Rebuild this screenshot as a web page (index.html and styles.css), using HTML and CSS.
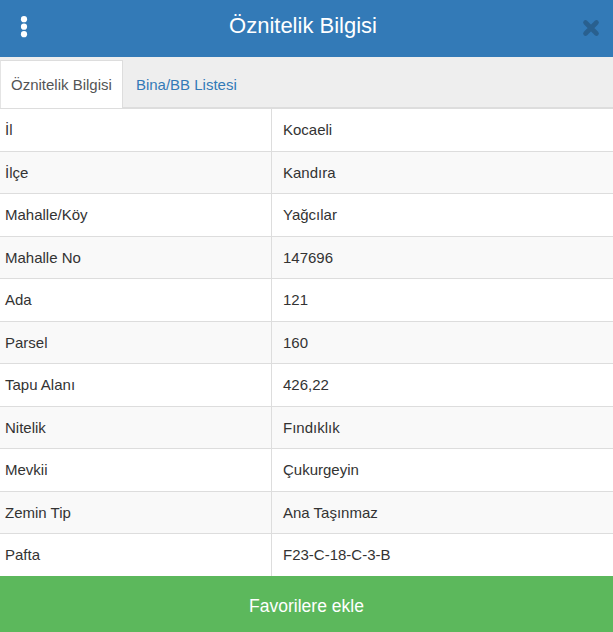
FILE: index.html
```html
<!DOCTYPE html>
<html lang="tr">
<head>
<meta charset="utf-8">
<title>Öznitelik Bilgisi</title>
<link rel="stylesheet" href="styles.css">
</head>
<body>
<div class="panel">
  <header class="header">
    <span class="menu">
      <svg width="10" height="24" viewBox="0 0 10 24"><circle cx="5" cy="4.2" r="3.1" fill="#fff"/><circle cx="5" cy="11.7" r="3.1" fill="#fff"/><circle cx="5" cy="19.2" r="3.1" fill="#fff"/></svg>
    </span>
    <h1 class="title">Öznitelik Bilgisi</h1>
    <span class="close">
      <svg width="18" height="18" viewBox="0 0 18 18"><path d="M3.5 3.5 L14.5 14.5 M14.5 3.5 L3.5 14.5" stroke="#29608f" stroke-width="4.6" stroke-linecap="round"/></svg>
    </span>
  </header>
  <nav class="tabs">
    <span class="tab active">Öznitelik Bilgisi</span>
    <span class="tab">Bina/BB Listesi</span>
  </nav>
  <div class="table">
    <div class="row"><div class="cell key">İl</div><div class="cell val">Kocaeli</div></div>
    <div class="row"><div class="cell key">İlçe</div><div class="cell val">Kandıra</div></div>
    <div class="row"><div class="cell key">Mahalle/Köy</div><div class="cell val">Yağcılar</div></div>
    <div class="row"><div class="cell key">Mahalle No</div><div class="cell val">147696</div></div>
    <div class="row"><div class="cell key">Ada</div><div class="cell val">121</div></div>
    <div class="row"><div class="cell key">Parsel</div><div class="cell val">160</div></div>
    <div class="row"><div class="cell key">Tapu Alanı</div><div class="cell val">426,22</div></div>
    <div class="row"><div class="cell key">Nitelik</div><div class="cell val">Fındıklık</div></div>
    <div class="row"><div class="cell key">Mevkii</div><div class="cell val">Çukurgeyin</div></div>
    <div class="row"><div class="cell key">Zemin Tip</div><div class="cell val">Ana Taşınmaz</div></div>
    <div class="row"><div class="cell key">Pafta</div><div class="cell val">F23-C-18-C-3-B</div></div>
  </div>
  <button class="fav">Favorilere ekle</button>
</div>
</body>
</html>
```

FILE: styles.css
```css
html, body {
  margin: 0;
  padding: 0;
}
body {
  font-family: "Liberation Sans", Arial, sans-serif;
  color: #333;
  background: #fff;
}
.panel {
  width: 613px;
  height: 632px;
  display: flex;
  flex-direction: column;
  overflow: hidden;
}
.header {
  height: 57px;
  background: #337ab7;
  display: flex;
  align-items: center;
  flex-shrink: 0;
}
.menu {
  width: 48px;
  display: flex;
  justify-content: center;
  margin-top: -4px;
}
.menu svg { display: block; }
.title {
  flex: 1;
  margin: 0;
  text-align: center;
  color: #fff;
  font-weight: normal;
  font-size: 22px;
  margin-top: -5px;
}
.close {
  width: 55px;
  display: flex;
  justify-content: flex-start;
  padding-left: 24px;
  box-sizing: border-box;
  margin-top: -2px;
}
.close svg { display: block; }
.tabs {
  height: 50px;
  background: #eee;
  border-bottom: 1px solid #ddd;
  display: flex;
  align-items: flex-end;
  flex-shrink: 0;
}
.tab {
  box-sizing: border-box;
  display: flex;
  align-items: center;
  padding: 0 10px;
  font-size: 15px;
  color: #337ab7;
  border: 1px solid transparent;
  border-bottom: none;
  margin-right: 2px;
  margin-bottom: -1px;
  height: 48px;
}
.tab.active {
  background: #fff;
  color: #555;
  border-color: #ddd;
  border-left-color: #e4e4e4;
}
.table {
  flex-shrink: 0;
}
.row {
  display: grid;
  grid-template-columns: 271px 1fr;
  height: 42.5px;
  box-sizing: border-box;
  border-top: 1px solid #ddd;
  font-size: 15px;
}
.row:nth-child(even) {
  background: #f9f9f9;
}
.cell {
  display: flex;
  align-items: center;
}
.key {
  padding-left: 5px;
}
.val {
  border-left: 1px solid #ddd;
  padding-left: 11px;
}
.fav {
  flex: 1;
  border: none;
  margin: 0;
  background: #5cb85c;
  color: #fff;
  font-family: "Liberation Sans", Arial, sans-serif;
  font-size: 17.5px;
  padding: 6px 0 0;
  width: 100%;
}
```
